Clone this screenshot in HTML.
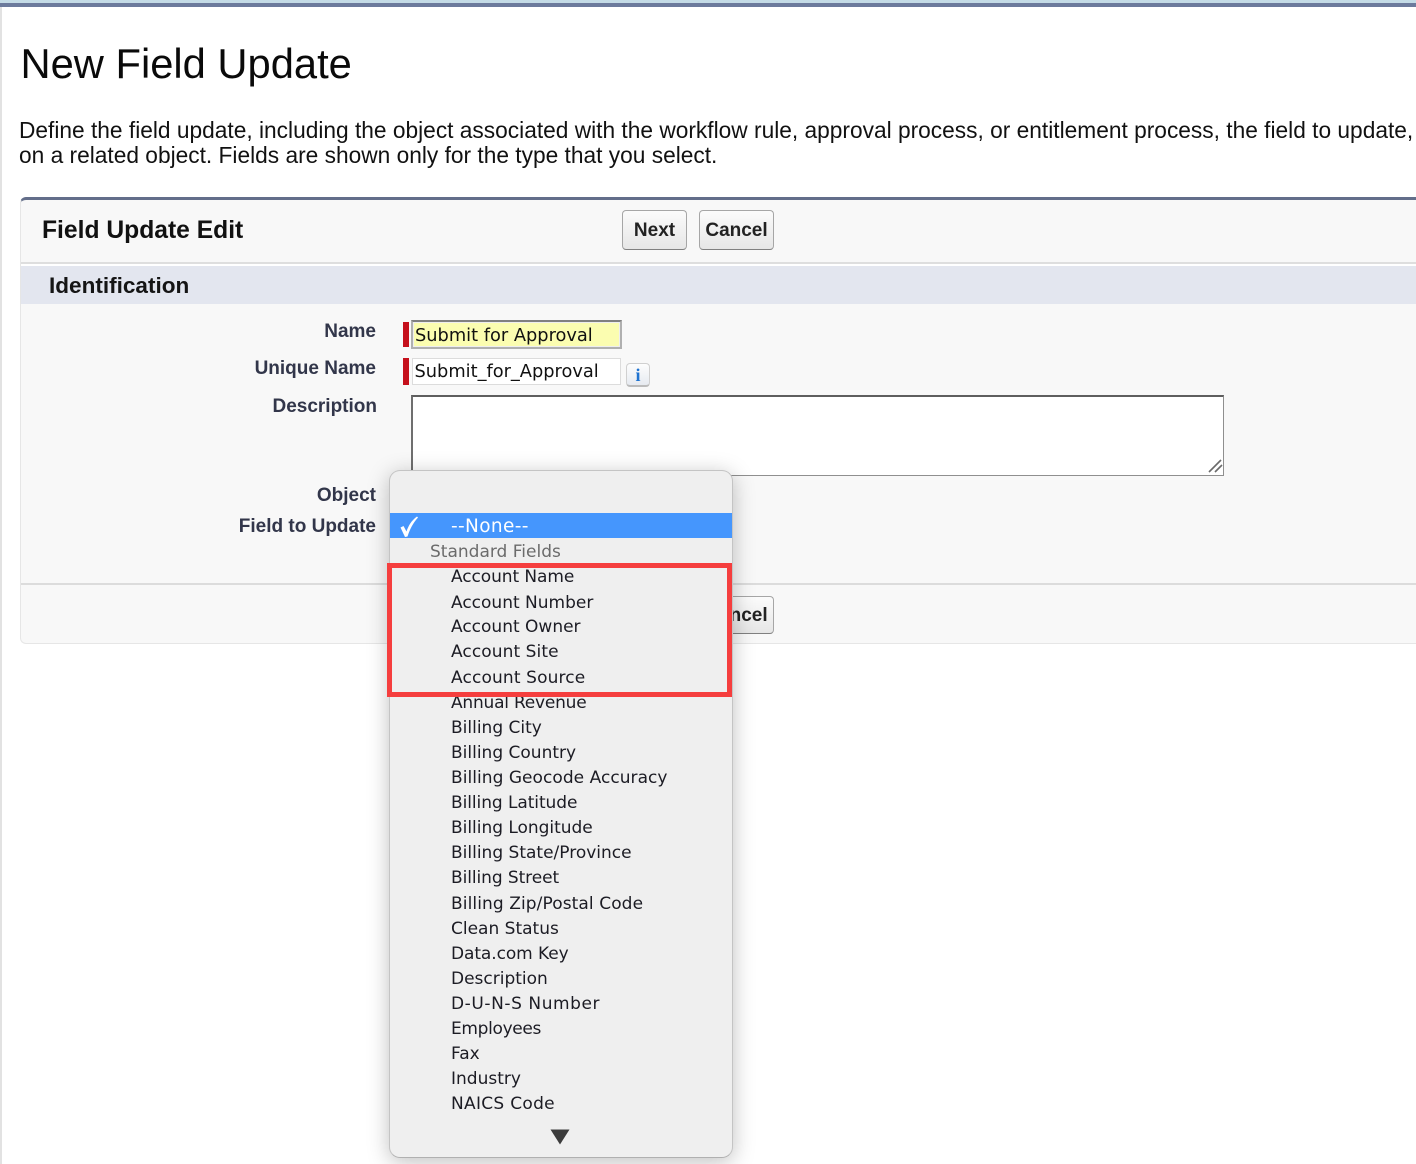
<!DOCTYPE html>
<html>
<head>
<meta charset="utf-8">
<style>
html,body{margin:0;padding:0;background:#fff;}
html{width:1416px;height:1164px;overflow:hidden;}
body{width:1416px;height:1164px;position:relative;overflow:hidden;font-family:"Liberation Sans",Arial,sans-serif;color:#000;filter:blur(.3px);}
.a{position:absolute;white-space:nowrap;}
.lbl{position:absolute;white-space:nowrap;font-weight:bold;font-size:19px;color:#32364a;text-align:right;line-height:24px;}
.btn{position:absolute;box-sizing:border-box;height:40px;top:210px;border:1.5px solid #a6a6a6;border-bottom-color:#808080;border-radius:4px;background:linear-gradient(#fbfbfb,#e6e6e6);font-weight:bold;font-size:19px;color:#222;text-align:center;line-height:39px;}
.req{position:absolute;left:403px;width:6px;background:#c5101c;}
.it{position:absolute;left:451px;white-space:nowrap;font-family:"DejaVu Sans",sans-serif;font-size:17px;line-height:24px;color:#1c1c24;}
</style>
</head>
<body>
<div class="a" style="left:0;top:0;width:1416px;height:3px;background:#c4dbe6;"></div>
<div class="a" style="left:0;top:3px;width:1416px;height:4px;background:#6c7a9c;"></div>
<div class="a" style="left:0;top:7px;width:2px;height:1157px;background:#e2e2e2;"></div>

<div class="a" style="left:20.5px;top:40px;font-size:41.7px;line-height:48px;color:#0a0a0a;">New Field Update</div>
<div class="a" style="left:19px;top:118px;font-size:22.72px;line-height:25px;color:#111;">Define the field update, including the object associated with the workflow rule, approval process, or entitlement process, the field to update,<br>on a related object. Fields are shown only for the type that you select.</div>

<!-- panel -->
<div class="a" style="left:20px;top:197px;width:1396px;height:447px;box-sizing:border-box;background:#f8f8f8;border-top:3.5px solid #636e8a;border-left:1.5px solid #e6e6e6;border-bottom:1.5px solid #e6e6e6;border-radius:6px 0 0 6px;"></div>
<div class="a" style="left:21px;top:262px;width:1395px;height:2px;background:#dedede;"></div>
<div class="a" style="left:21px;top:264px;width:1395px;height:2px;background:#fff;"></div>
<div class="a" style="left:21px;top:266px;width:1395px;height:38px;background:#e3e6ef;"></div>
<div class="a" style="left:21px;top:583px;width:1395px;height:1.5px;background:#dcdcdc;"></div>

<div class="a" style="left:42px;top:216px;font-weight:bold;font-size:24.65px;line-height:30px;color:#111;">Field Update Edit</div>
<div class="btn" style="left:622px;width:65px;">Next</div>
<div class="btn" style="left:699px;width:75px;">Cancel</div>
<div class="a" style="left:49px;top:272px;font-weight:bold;font-size:22.55px;line-height:28px;color:#151515;">Identification</div>

<div class="lbl" style="right:1040px;top:320px;">Name</div>
<div class="lbl" style="right:1040px;top:357px;">Unique Name</div>
<div class="lbl" style="right:1039px;top:395px;">Description</div>
<div class="lbl" style="right:1040px;top:484px;">Object</div>
<div class="lbl" style="right:1040px;top:515px;">Field to Update</div>

<div class="req" style="top:322px;height:25px;"></div>
<div class="req" style="top:358px;height:27px;"></div>

<div class="a" style="left:411px;top:320px;width:211px;height:29px;box-sizing:border-box;background:#fbfdb0;border:2px solid #b0b0b0;border-top-color:#808080;box-shadow:inset 0 0 0 1px #eee;"></div>
<div class="a" style="left:415px;top:323px;font-family:'DejaVu Sans',sans-serif;font-size:17.8px;line-height:25px;color:#111;">Submit for Approval</div>
<div class="a" style="left:412px;top:358px;width:209px;height:27px;box-sizing:border-box;background:#fff;border:1px solid #dcdcdc;"></div>
<div class="a" style="left:414.5px;top:359px;font-family:'DejaVu Sans',sans-serif;font-size:17.8px;line-height:25px;color:#111;">Submit_for_Approval</div>
<div class="a" style="left:626px;top:363px;width:24px;height:24px;box-sizing:border-box;border:1px solid #d0d0d0;border-bottom:2px solid #bbb;border-radius:4px;background:linear-gradient(#fdfdfd,#e6eaf0);color:#1f73d0;font-family:'Liberation Serif',serif;font-weight:bold;font-size:18px;line-height:23px;text-align:center;">i</div>

<div class="a" style="left:411px;top:395px;width:812.5px;height:81px;box-sizing:border-box;background:#fff;border:1.5px solid #8f8f8f;border-top:2px solid #5e5e5e;border-left:2px solid #6e6e6e;"></div>
<svg class="a" style="left:1205px;top:458px;" width="18" height="16" viewBox="0 0 18 16"><path d="M4 14L16 2M10 14L17 7" stroke="#6a6a6a" stroke-width="1.6" fill="none"/></svg>

<div class="btn" style="left:699px;top:596px;width:75px;height:38px;line-height:37px;">Cancel</div>

<!-- dropdown -->
<div class="a" style="left:389px;top:470px;width:344px;height:688px;box-sizing:border-box;background:#efefef;border:1px solid #c4c4c4;border-bottom:1.5px solid #b0b0b0;border-radius:11px;box-shadow:0 4px 22px rgba(0,0,0,.25);"></div>
<div class="a" style="left:390px;top:513px;width:342px;height:25px;background:#4596fd;"></div>
<svg class="a" style="left:398px;top:514px;" width="22" height="24" viewBox="0 0 22 24"><path d="M2.5 13.5L5.5 12L8.5 17.5C10.5 11.5 13.5 6.5 19 2.5L20 3.5C15 9 12 15 9.5 22.5L7 23Z" fill="#fff"/></svg>
<div class="it" style="top:515px;color:#fff;font-size:18.5px;letter-spacing:.35px;">--None--</div>
<div class="it" style="top:540px;left:430px;color:#6b6b6b;">Standard Fields</div>
<div class="it" style="top:565px;letter-spacing:-.08px;">Account Name</div>
<div class="it" style="top:590.5px;">Account Number</div>
<div class="it" style="top:615px;">Account Owner</div>
<div class="it" style="top:640px;letter-spacing:.08px;">Account Site</div>
<div class="it" style="top:666px;letter-spacing:.14px;">Account Source</div>
<div class="it" style="top:691px;letter-spacing:-.22px;">Annual Revenue</div>
<div class="it" style="top:716px;">Billing City</div>
<div class="it" style="top:741px;">Billing Country</div>
<div class="it" style="top:766px;letter-spacing:.04px;">Billing Geocode Accuracy</div>
<div class="it" style="top:791px;letter-spacing:-.07px;">Billing Latitude</div>
<div class="it" style="top:816px;letter-spacing:-.02px;">Billing Longitude</div>
<div class="it" style="top:841px;">Billing State/Province</div>
<div class="it" style="top:866px;letter-spacing:-.08px;">Billing Street</div>
<div class="it" style="top:892px;letter-spacing:.09px;">Billing Zip/Postal Code</div>
<div class="it" style="top:917px;">Clean Status</div>
<div class="it" style="top:942px;letter-spacing:-.08px;">Data.com Key</div>
<div class="it" style="top:967px;">Description</div>
<div class="it" style="top:992px;letter-spacing:.57px;">D-U-N-S Number</div>
<div class="it" style="top:1017px;letter-spacing:-.33px;">Employees</div>
<div class="it" style="top:1042px;">Fax</div>
<div class="it" style="top:1067px;">Industry</div>
<div class="it" style="top:1092px;letter-spacing:.3px;">NAICS Code</div>
<svg class="a" style="left:550px;top:1129px;" width="20" height="16" viewBox="0 0 20 16"><path d="M0.5 0.5H19.5L10 15.5Z" fill="#3c3c3c"/></svg>

<div class="a" style="left:387px;top:563px;width:345px;height:134px;box-sizing:border-box;border:5px solid #f53e3e;"></div>
</body>
</html>
